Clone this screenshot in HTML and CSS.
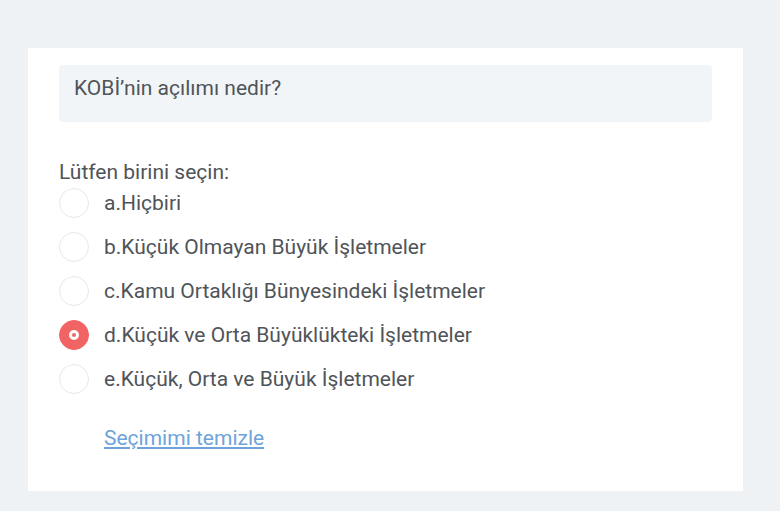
FILE: index.html
```html
<!DOCTYPE html>
<html lang="tr">
<head>
<meta charset="utf-8">
<link rel="stylesheet" href="styles.css">
</head>
<body>
<div class="card">
  <div class="question">KOBİ’nin açılımı nedir?</div>
  <div class="prompt">Lütfen birini seçin:</div>
  <div class="options">
    <label class="option"><span class="radio"></span><span class="label">a.Hiçbiri</span></label>
    <label class="option"><span class="radio"></span><span class="label">b.Küçük Olmayan Büyük İşletmeler</span></label>
    <label class="option"><span class="radio"></span><span class="label">c.Kamu Ortaklığı Bünyesindeki İşletmeler</span></label>
    <label class="option"><span class="radio checked"></span><span class="label">d.Küçük ve Orta Büyüklükteki İşletmeler</span></label>
    <label class="option"><span class="radio"></span><span class="label">e.Küçük, Orta ve Büyük İşletmeler</span></label>
  </div>
  <a class="clear" href="#">Seçimimi temizle</a>
</div>
</body>
</html>
```
FILE: styles.css
```css
html, body {
  margin: 0;
  padding: 0;
}
body {
  background: #eff2f4;
  font-family: Roboto, "Liberation Sans", sans-serif;
  color: #4f5459;
  font-size: 21px;
  padding: 48px 0 0 28px;
  height: 511px;
  box-sizing: border-box;
  overflow: hidden;
}
.card {
  background: #fff;
  width: 715px;
  height: 443px;
  box-sizing: border-box;
  padding: 17px 31px 0 31px;
}
.question {
  background: #f2f5f8;
  border-radius: 4px;
  height: 57px;
  box-sizing: border-box;
  padding: 11px 15px 0 15px;
  line-height: 24px;
}
.prompt {
  margin-top: 41px;
  line-height: 18px;
}
.options {
  display: flex;
  flex-direction: column;
}
.option {
  display: flex;
  align-items: center;
  height: 44px;
}
.radio {
  width: 30px;
  height: 30px;
  box-sizing: border-box;
  border: 1px solid #e6e8ea;
  border-radius: 50%;
  margin-right: 15px;
  flex: none;
  display: flex;
  align-items: center;
  justify-content: center;
}
.radio.checked {
  background: #f26464;
  border-color: #f26464;
}
.radio.checked::after {
  content: "";
  width: 4px;
  height: 4px;
  border-radius: 50%;
  background: #f26464;
  border: 3px solid #fff;
}
.clear {
  display: inline-block;
  margin: 25px 0 0 45px;
  color: #6ea3da;
  text-decoration: underline;
  line-height: 24px;
}
```
